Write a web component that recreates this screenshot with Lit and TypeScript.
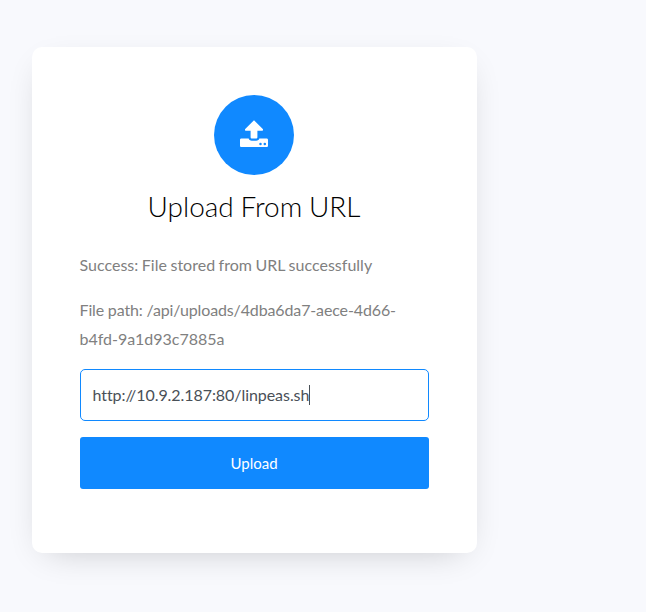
import { LitElement, html, css } from "lit";
import { customElement, property } from "lit/decorators.js";

@customElement("app-root")
class AppRoot extends LitElement {
  @property() value = "http://10.9.2.187:80/linpeas.sh";

  static styles = css`
    * { box-sizing: border-box; }
    :host {
      display: block;
      box-sizing: border-box;
      height: 612px;
      padding: 47px 31.5px;
      overflow: hidden;
      background: #f8f9fd;
      font: 400 16px/1.8 Lato, sans-serif;
      color: #808080;
    }
    .card {
      width: 445px;
      height: 506px;
      padding: 48px;
      background: #fff;
      border-radius: 10px;
      box-shadow: 0 10px 34px -15px rgba(0, 0, 0, 0.24);
    }
    .icon {
      display: flex;
      align-items: center;
      justify-content: center;
      width: 80px;
      height: 80px;
      margin: 0 auto 15px;
      padding-bottom: 2px;
      border-radius: 50%;
      background: #1089ff;
    }
    .icon svg { width: 28px; height: 28px; fill: #fff; }
    h3 {
      margin: 0 0 27.4px;
      text-align: center;
      font-weight: 300;
      font-size: 28px;
      line-height: 1.2;
      letter-spacing: -0.01px;
      word-spacing: -0.9px;
      color: #000;
    }
    p { margin: 0 0 16px; letter-spacing: 0.01px; word-spacing: -0.6px; }
    .path { letter-spacing: -0.02px; }
    .path .head { letter-spacing: -0.13px; word-spacing: -0.2px; }
    .field {
      display: flex;
      align-items: center;
      height: 52px;
      margin-bottom: 16px;
      padding: 0 12px;
      border: 1px solid #1089ff;
      border-radius: 5px;
      color: #495057;
      letter-spacing: -0.06px;
    }
    .caret { width: 1px; height: 20px; background: #495057; }
    .button {
      display: block;
      width: 100%;
      height: 52px;
      border: 0;
      border-radius: 3px;
      background: #1089ff;
      color: #fff;
      font: 400 15px/1.5 Lato, sans-serif;
    }
  `;

  render() {
    return html`
      <div class="card">
        <div class="icon">
          <svg viewBox="0 0 28 28">
            <path d="M14 .2 5.200 9c-.5.6-.1 1.800.7 1.800h4.700v6.400c0 .8.6 1.300 1.300 1.300h4.200c.7 0 1.300-.5 1.300-1.300v-6.400h4.700c.8 0 1.200-1.200.7-1.800z" />
            <path fill-rule="evenodd" d="M1.300 18.500h7.400c.2 1.300 1.500 2.200 3.100 2.200h4.400c1.600 0 2.900-.9 3.100-2.200h7.400c.7 0 1.300.6 1.300 1.300v6c0 .7-.6 1.300-1.300 1.300H1.300C.6 27.100 0 26.500 0 25.800v-6c0-.7.6-1.300 1.300-1.300zM20.500 22.800a1.250 1.250 0 1 0 0 2.500 1.250 1.250 0 0 0 0-2.500zm4.300 0a1.250 1.250 0 1 0 0 2.500 1.250 1.250 0 0 0 0-2.500z" />
          </svg>
        </div>
        <h3>Upload From URL</h3>
        <p>Success: File stored from URL successfully</p>
        <p class="path"><span class="head">File path: /api/uploads/4dba6da7-aece-4d66-</span>b4fd-9a1d93c7885a</p>
        <div class="field"><span>${this.value}</span><span class="caret"></span></div>
        <button class="button">Upload</button>
      </div>
    `;
  }
}
